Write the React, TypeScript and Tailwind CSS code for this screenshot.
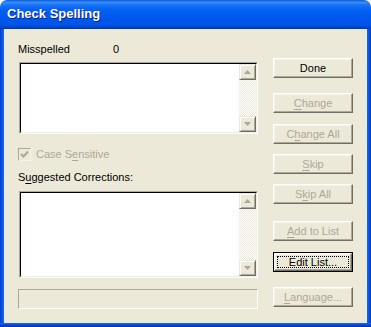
import React from "react";

const FONT = "font-['Tahoma','Liberation_Sans',Arial,sans-serif]";

type BtnProps = {
  label: string;
  u?: number;
  disabled?: boolean;
  focus?: boolean;
  className?: string;
};

const Label: React.FC<{ text: string; u?: number }> = ({ text, u }) => {
  if (u === undefined) return <>{text}</>;
  return (
    <>
      {text.slice(0, u)}
      <span className="underline underline-offset-[2px]">{text[u]}</span>
      {text.slice(u + 1)}
    </>
  );
};

const Btn: React.FC<BtnProps> = ({ label, u, disabled, focus, className }) => {
  const raised =
    "flex h-full w-full items-center justify-center border border-t-white border-l-white border-b-[#716F64] border-r-[#716F64] bg-[#ECE9D8] shadow-[inset_-1px_-1px_0_#ACA899,inset_1px_1px_0_#F5F4EA]";
  return (
    <div
      className={`h-[20px] w-[80px] text-[11px] leading-none ${
        disabled ? "text-[#ACA899]" : "text-black"
      } ${focus ? "border border-black" : ""} ${className ?? ""}`}
    >
      <div className={`relative ${raised}`}>
        <span>
          <Label text={label} u={u} />
        </span>
        {focus && (
          <span className="absolute inset-x-[2px] inset-y-[2px] border border-dotted border-black" />
        )}
      </div>
    </div>
  );
};

const Arrow: React.FC<{ down?: boolean }> = ({ down }) => (
  <div className="flex h-[16px] w-[17px] items-center justify-center border border-t-[#ECE9D8] border-l-[#ECE9D8] border-b-[#716F64] border-r-[#716F64] bg-[#ECE9D8] shadow-[inset_1px_1px_0_#fff,inset_-1px_-1px_0_#ACA899]">
    <svg width="7" height="4" viewBox="0 0 7 4">
      {down ? (
        <polygon points="0,0 7,0 3.5,4" fill="#ACA899" />
      ) : (
        <polygon points="0,4 7,4 3.5,0" fill="#ACA899" />
      )}
    </svg>
  </div>
);

const ListBox: React.FC<{ h: string }> = ({ h }) => (
  <div
    className={`ml-[1px] flex w-[239px] ${h} border border-t-[#ACA899] border-l-[#ACA899] border-b-white border-r-white`}
  >
    <div className="flex flex-1 border border-t-black border-l-black border-b-[#F1EFE2] border-r-[#F1EFE2] bg-white">
      <div className="flex-1" />
      <div className="flex w-[17px] flex-col justify-between bg-[repeating-conic-gradient(#ffffff_0_25%,#ECE9D8_0_50%)] bg-[length:2px_2px]">
        <Arrow />
        <Arrow down />
      </div>
    </div>
  </div>
);

export default function App() {
  return (
    <div className={`h-[327px] w-[371px] bg-white ${FONT}`}>
      <div className="flex h-full w-full flex-col">
        {/* title bar */}
        <div className="flex h-[29px] items-center rounded-t-[7px] bg-[linear-gradient(to_bottom,#0A5AD8_0%,#3A8CF5_8%,#1872F8_18%,#0061F2_35%,#0058EE_60%,#0054E8_85%,#0043CC_95%,#0037B0_100%)] pl-[7px] pb-[1px]">
          <span className="font-['Liberation_Sans',Arial,sans-serif] text-[13px] font-bold text-white [text-shadow:1px_1px_0_#0A1E8A]">
            Check Spelling
          </span>
        </div>

        <div className="flex flex-1">
          <div className="w-[4px] bg-[linear-gradient(to_right,#0036C8,#0558E8_50%,#166AEE)]" />
          <div className="flex flex-1 bg-[#ECE9D8] pl-[14px] text-[11px] text-black">
            {/* left column */}
            <div className="flex w-[240px] flex-col pt-[14px]">
              <div className="flex h-[13px] items-center leading-none">
                <span className="w-[95px]">Misspelled</span>
                <span>0</span>
              </div>
              <div className="mt-[6px]">
                <ListBox h="h-[72px]" />
              </div>
              <div className="mt-[14px] flex h-[13px] items-center text-[#ACA899]">
                <div className="flex h-[13px] w-[13px] items-center justify-center border border-t-[#ACA899] border-l-[#ACA899] border-b-[#F5F4EA] border-r-[#F5F4EA] bg-[#ECE9D8]">
                  <svg width="9" height="9" viewBox="0 0 9 9">
                    <path d="M1 4 L3.5 6.5 L8 1.5" stroke="#ACA899" strokeWidth="2" fill="none" />
                  </svg>
                </div>
                <span className="ml-[5px] leading-none">
                  <Label text="Case Sensitive" u={6} />
                </span>
              </div>
              <div className="mt-[11px] h-[13px] leading-none">
                <Label text="Suggested Corrections:" u={1} />
              </div>
              <div className="mt-[6px]">
                <ListBox h="h-[87px]" />
              </div>
              <div className="mt-[11px] h-[20px] w-[240px] border border-t-[#ACA899] border-l-[#ACA899] border-b-white border-r-white" />
            </div>

            {/* buttons */}
            <div className="ml-[15px] flex flex-col pt-[29px]">
              <Btn label="Done" />
              <Btn label="Change" u={0} disabled className="mt-[15px]" />
              <Btn label="Change All" u={1} disabled className="mt-[11px]" />
              <Btn label="Skip" u={0} disabled className="mt-[10px]" />
              <Btn label="Skip All" u={1} disabled className="mt-[10px]" />
              <Btn label="Add to List" u={0} disabled className="mt-[17px]" />
              <Btn label="Edit List..." focus className="mt-[11px]" />
              <Btn label="Language..." u={0} disabled className="mt-[15px]" />
            </div>
          </div>
          <div className="w-[4px] bg-[linear-gradient(to_left,#0030B8,#0558E8_50%,#166AEE)]" />
        </div>
        <div className="h-[4px] bg-[linear-gradient(to_bottom,#166AEE,#0548D8_50%,#0030B0)]" />
      </div>
    </div>
  );
}
